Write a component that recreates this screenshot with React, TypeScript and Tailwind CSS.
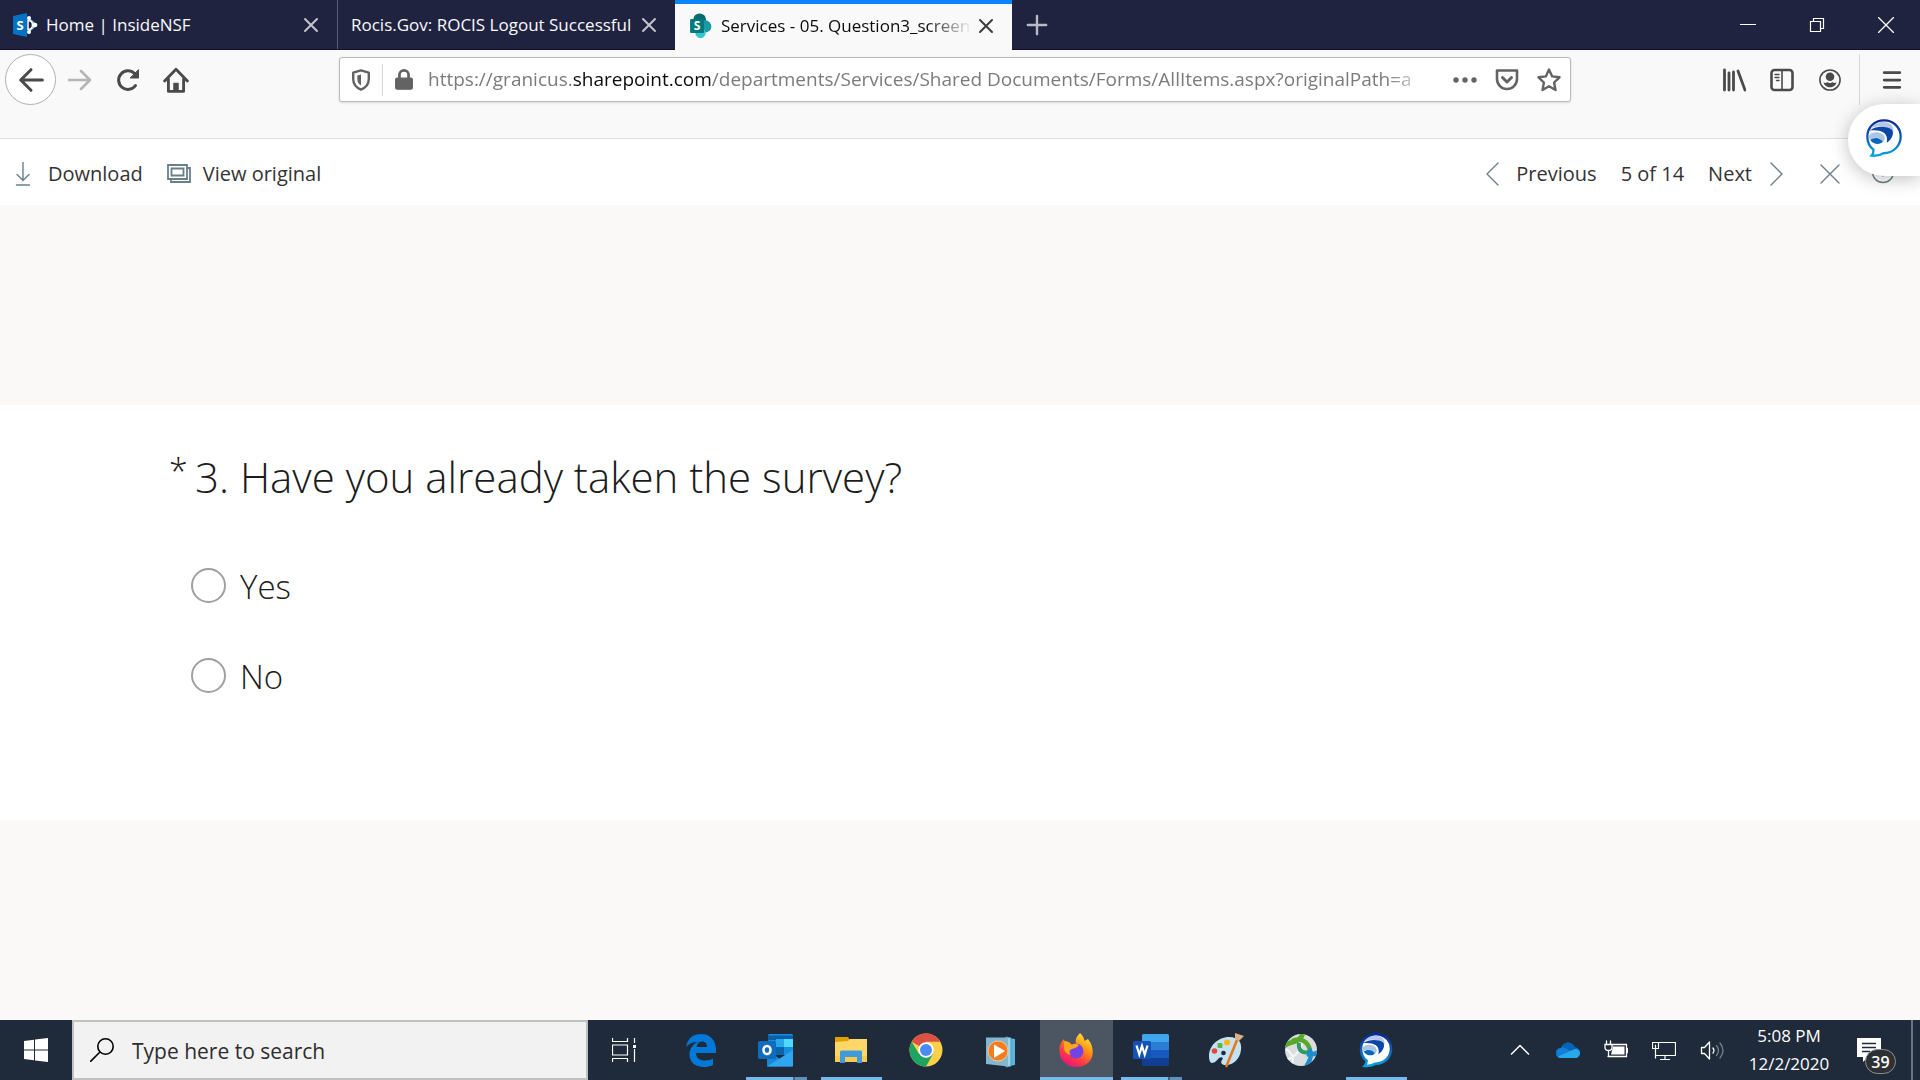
import React from "react";

type IconProps = { children: React.ReactNode; size?: string; box?: string };

function Icon({ children, size = "size-6", box = "0 0 24 24" }: IconProps) {
  return (
    <svg viewBox={box} className={`${size} shrink-0`} fill="none" stroke="currentColor" strokeWidth="2.6" strokeLinecap="round" strokeLinejoin="round" aria-hidden="true">
      {children}
    </svg>
  );
}

function CloseX() {
  return (
    <Icon size="size-4" box="0 0 16 16">
      <path d="M2 2l12 12M14 2L2 14" strokeWidth="2" />
    </Icon>
  );
}

function ChatLogo({ size, solid }: { size: string; solid?: boolean }) {
  return (
    <svg viewBox="0 0 40 42" className={`${size} shrink-0`} aria-hidden="true">
      <defs>
        <linearGradient id="chatEdge" x1="0" y1="0" x2="0" y2="1">
          <stop offset="0" stopColor="#0a2a96" />
          <stop offset="0.5" stopColor="#0b5db5" />
          <stop offset="1" stopColor="#06a5e0" />
        </linearGradient>
      </defs>
      <path d="M20 2.500C30 2.500 37.500 10 37.500 19.500S30 37 19.500 37C17 38.500 12 40 7 39.500C8.500 38 9 36 9 33.500C4.500 30 2.500 25 2.500 19.500C2.500 10 10 2.500 20 2.500Z" fill="#fff" stroke="url(#chatEdge)" strokeWidth={solid ? 3 : 2.4} />
      <path d="M6 11C11 4 21 2.500 27 6.500C31 10 30.500 15 28 19C28 13 25 10 20 9.500C14 8.500 10 9 6 11Z" fill="#b6c5e8" />
      <path d="M5 13C12 8 23 8.500 28 12C31 15 29 22 23 26C24 19 22 15.500 15 13.500C12 12.600 8 12.600 5 13Z" fill="#0b47a5" />
      <path d="M4.500 18C8 13.500 17 14 20 18.500C21.500 21 21 24 18.500 26C17 21 12 19 4.500 22.500Z" fill="#a9c4e6" />
      <path d="M5.500 23C9 20 16 20 18.500 25C16 28.500 9 28 5.500 23Z" fill="#0a66b6" />
    </svg>
  );
}

function TabBar() {
  return (
    <header className="flex h-[50px] border-b border-[#10122b] bg-[#202340] text-[17px] text-[#f9f9fa]">
      <div className="flex w-[338px] items-center border-r border-[#5b5d73] pl-3 pr-4">
        <svg viewBox="0 0 26 26" className="size-[26px] shrink-0" aria-hidden="true">
          <path d="M1 4l14-3v24L1 22z" fill="#0072c6" />
          <path d="M16 6l8 7-8 7" fill="none" stroke="#8fc8f0" strokeWidth="2" />
          <path d="M16 8.500a4.500 4.500 0 0 1 0 9z" fill="none" stroke="#fff" strokeWidth="1.500" />
          <circle cx="17" cy="6" r="2" fill="#fff" />
          <circle cx="23" cy="13" r="2.300" fill="#fff" />
          <circle cx="17" cy="20" r="2" fill="#fff" />
          <text x="8" y="18" fontSize="13" fontWeight="700" fill="#fff" textAnchor="middle" fontFamily="Open Sans">S</text>
        </svg>
        <span className="ml-2 flex-1 whitespace-nowrap">Home | InsideNSF</span>
        <button aria-label="Close tab" className="flex size-5 items-center justify-center text-[#c3c3cc]"><CloseX /></button>
      </div>
      <div className="flex w-[337px] items-center pl-[13px] pr-4">
        <span className="flex-1 whitespace-nowrap">Rocis.Gov: ROCIS Logout Successful</span>
        <button aria-label="Close tab" className="flex size-5 items-center justify-center text-[#c3c3cc]"><CloseX /></button>
      </div>
      <div className="-mb-px flex w-[337px] items-center border-t-4 border-[#0a84ff] bg-[#f9f9fa] pb-[3px] pl-[13px] pr-4 text-[#0c0c0d]">
        <svg viewBox="0 0 26 30" className="h-[26px] w-[25px] shrink-0" aria-hidden="true">
          <circle cx="12" cy="8" r="7.500" fill="#036c70" />
          <circle cx="18.500" cy="15.500" r="7" fill="#1a9ba1" />
          <circle cx="13" cy="23" r="6" fill="#37c6d0" />
          <rect x="1" y="7" width="16" height="16" rx="1" fill="#03787c" />
          <text x="9" y="20" fontSize="14" fontWeight="700" fill="#fff" textAnchor="middle" fontFamily="Open Sans">S</text>
        </svg>
        <span className="ml-2 flex-1 overflow-hidden whitespace-nowrap [mask-image:linear-gradient(to_right,black_82%,transparent)]">Services - 05. Question3_screen</span>
        <button aria-label="Close tab" className="ml-1 flex size-5 items-center justify-center text-[#3c3c3d]"><CloseX /></button>
      </div>
      <button aria-label="New tab" className="flex w-[50px] items-center justify-center text-[#b9bac6]">
        <Icon size="size-[22px]"><path d="M12 2v20M2 12h20" strokeWidth="2.600" /></Icon>
      </button>
      <div className="ml-auto flex text-white">
        <button aria-label="Minimize" className="flex w-[69px] items-center justify-center"><Icon size="size-4" box="0 0 16 16"><path d="M0 7.500h16" strokeWidth="1" /></Icon></button>
        <button aria-label="Restore" className="flex w-[69px] items-center justify-center"><Icon size="size-4" box="0 0 16 16"><path d="M1.500 4.500h10v10h-10zM4.500 4v-2.500h10v10h-2.500" strokeWidth="1.200" strokeLinejoin="miter" /></Icon></button>
        <button aria-label="Close window" className="flex w-[69px] items-center justify-center"><Icon size="size-4" box="0 0 16 16"><path d="M.5.5l15 15M15.500.5l-15 15" strokeWidth="1.300" /></Icon></button>
      </div>
    </header>
  );
}

function Toolbar() {
  return (
    <nav className="flex h-[89px] items-start border-b border-[#dedede] bg-[#f9f9fa] pt-1 text-[#4a4a4b]">
      <div className="flex h-[51px] w-[339px] shrink-0 items-center pl-[5px]">
        <button aria-label="Back" className="flex size-[51px] items-center justify-center rounded-full border border-[#b0b0b0] bg-white">
          <Icon size="size-[26px]"><path d="M22.500 12H2.500M12 2.500L2.500 12l9.500 9.500" strokeWidth="2.800" /></Icon>
        </button>
        <button aria-label="Forward" className="flex w-12 items-center justify-center text-[#b5b5b6]"><Icon><path d="M1 12h21M13 3l9 9-9 9" /></Icon></button>
        <button aria-label="Reload" className="flex w-12 items-center justify-center"><Icon><path d="M19.500 17.500A9.300 9.300 0 1 1 18.500 5.500" strokeWidth="3" /><path d="M22.500 2v8h-8z" fill="currentColor" strokeWidth="1" /></Icon></button>
        <button aria-label="Home" className="flex w-12 items-center justify-center">
          <Icon size="size-[26px]"><path d="M1.500 13L12 2l10.500 11M5 11v11.500h14V11" /><path d="M10 15h4v7h-4z" fill="currentColor" strokeWidth="1" /></Icon>
        </button>
      </div>
      <div className="mt-[3px] flex h-[45px] min-w-0 flex-1 items-center rounded-[3px] border border-[#b9b9bb] bg-white text-[#636364] shadow-sm">
        <button aria-label="Tracking protection" className="flex w-[42px] items-center justify-center"><Icon size="size-[22px]"><path d="M12 1.500l8.500 2.500v7c0 6-3.500 9.500-8.500 11.500-5-2-8.500-5.500-8.500-11.500V4z" /><path d="M12 6v12c-2.500-1.500-4-3.500-4-7V7z" fill="currentColor" stroke="none" /></Icon></button>
        <span className="h-8 w-px bg-[#d7d7db]" />
        <button aria-label="Connection secure" className="flex w-[42px] items-center justify-center"><Icon size="size-[22px]"><rect x="3" y="10" width="18" height="12" rx="1.500" fill="currentColor" strokeWidth="1.500" /><path d="M7 10V6.500a5 5 0 0 1 10 0V10" strokeWidth="3" /></Icon></button>
        <div className="ml-[3px] min-w-0 flex-1 overflow-hidden whitespace-nowrap text-[19px] text-[#7b7b7c] [mask-image:linear-gradient(to_right,black_96%,transparent)]">
          https://granicus.<span className="text-[#0c0c0d]">sharepoint.com</span>/departments/Services/Shared Documents/Forms/AllItems.aspx?originalPath=a
        </div>
        <button aria-label="Page actions" className="flex w-[50px] items-center justify-end pr-px"><Icon><g fill="currentColor" stroke="none"><circle cx="3" cy="12" r="2.700" /><circle cx="12" cy="12" r="2.700" /><circle cx="21" cy="12" r="2.700" /></g></Icon></button>
        <button aria-label="Save to Pocket" className="ml-2 flex w-[42px] items-center justify-center"><Icon><path d="M2 2.500h20V11a10 10 0 0 1-20 0z" /><path d="M7.500 9.500l4.500 4.500 4.500-4.500" strokeWidth="3" /></Icon></button>
        <button aria-label="Bookmark" className="flex w-[42px] items-center justify-center"><Icon><path d="M12 1.500l3.200 6.900 7.300.9-5.400 5.200 1.400 7.500-6.500-3.700L5.500 22l1.400-7.500L1.500 9.300l7.300-.9z" strokeWidth="2.400" /></Icon></button>
      </div>
      <div className="flex h-[51px] w-[349px] shrink-0 items-center justify-end">
        <button aria-label="Library" className="flex w-12 items-center justify-center"><Icon><path d="M2.500 2v20M7 5v17M11.500 4v18M16 3l7 19" strokeWidth="2.800" /></Icon></button>
        <button aria-label="Sidebars" className="flex w-12 items-center justify-center"><Icon><rect x="1.500" y="2" width="21" height="20" rx="3" /><path d="M12 2v20" strokeWidth="1.600" /><path d="M5 6.500h4M5 9.500h4M6.500 12.500h2.500" strokeWidth="1.400" /></Icon></button>
        <button aria-label="Account" className="flex w-12 items-center justify-center"><Icon size="size-[22px]"><circle cx="12" cy="12" r="11" strokeWidth="1.700" /><circle cx="12" cy="8.500" r="4.700" fill="currentColor" stroke="none" /><path d="M5 14.500c2 1.500 4 0 4.500 0s2 1 2.500 1 2-1 2.500-1 2.500 1.500 4.500 0c-.5 3.500-4 5.500-7 5.500s-6.500-2-7-5.500z" fill="currentColor" stroke="none" /></Icon></button>
        <span className="ml-[5px] h-full w-px bg-[#d7d7db]" />
        <button aria-label="Menu" className="flex w-[60px] items-center justify-center pl-1"><Icon size="size-[22px]"><path d="M3.500 4h17M3.500 12h17M3.500 20h17" strokeWidth="3" /></Icon></button>
      </div>
    </nav>
  );
}

function CommandBar() {
  return (
    <div className="relative flex h-[66px] items-center bg-white pt-[3px] text-[20px] text-[#333]">
      <button className="flex items-center gap-[13px] pl-[11px]">
        <span className="text-[#6a7f8c]"><Icon><path d="M12 0v18M6 12.500l6 6L18 12.500M5.500 23h13" strokeWidth="1.400" /></Icon></span>
        Download
      </button>
      <button className="ml-6 flex items-center gap-3">
        <span className="text-[#6a7f8c]"><Icon><path d="M1 3h19v14H1zM4.500 6.500h12v7h-12zM20 6h3v14H4v-3" strokeWidth="1.800" strokeLinejoin="miter" /></Icon></span>
        View original
      </button>
      <div className="ml-auto flex items-center pr-[25px]">
        <button className="flex items-center gap-3"><span className="text-[#6a7f8c]"><Icon><path d="M18 1L7 12l11 11" strokeWidth="1.400" /></Icon></span>Previous</button>
        <span className="ml-6">5 of 14</span>
        <button className="ml-6 flex items-center gap-3">Next<span className="text-[#6a7f8c]"><Icon><path d="M7 1l11 11L7 23" strokeWidth="1.400" /></Icon></span></button>
        <button aria-label="Close preview" className="ml-[30px] text-[#6a7f8c]"><Icon><path d="M3 3l18 18M21 3L3 21" strokeWidth="1.400" /></Icon></button>
        <button aria-label="Information" className="ml-[29px] text-[#6a7f8c]"><Icon><circle cx="12" cy="10" r="10.500" strokeWidth="1.400" /><path d="M12 8v6M12 4v1" strokeWidth="1.400" /></Icon></button>
      </div>
      <button aria-label="Open chat" className="absolute -top-[35px] right-0 flex h-[72px] w-[72px] items-center justify-center rounded-l-full bg-white pb-1 shadow-[0_3px_18px_rgba(0,0,0,0.25)]">
        <ChatLogo size="size-10" />
      </button>
    </div>
  );
}

function Question() {
  return (
    <main className="flex flex-1 items-center bg-[#faf9f8]">
      <fieldset className="h-[415px] w-full bg-white pl-[169px] pt-[46px] text-[#1c1c1c]">
        <legend className="float-left flex w-full text-[42px] leading-[52px] font-light">
          <span className="w-[26px] text-[34px] leading-10">*</span>
          <span>3. Have you already taken the survey?</span>
        </legend>
        <div className="clear-both flex flex-col gap-[34px] pl-[22px] pt-14">
          {["Yes", "No"].map((answer) => (
            <label key={answer} className="flex h-14 items-center gap-[14px] text-[33px] font-light">
              <input type="radio" name="taken" className="mb-1 size-[35px] appearance-none rounded-full border-2 border-[#a0a0a0] bg-white" />
              {answer}
            </label>
          ))}
        </div>
      </fieldset>
    </main>
  );
}

type App = { name: string; art: React.ReactNode; state?: "open" | "stacked" | "active" };

const apps: App[] = [
  { name: "Microsoft Edge", art: <path d="M3 15C5 5 11 2 18 2c10 0 15 7 15 16v3H13c0 5 4 7.500 9 7.500 4 0 6-1 8-2v6.500c-3 1.500-6 2-9 2C12 35 6 30 6.500 21c.5-5 4-9 8-11C9 10 6 12 3 15zm10.500 0h10.500c0-4-2-5.500-5-5.500s-5 2-5.500 5.500z" fill="#0078d7" /> },
  {
    name: "Outlook", state: "stacked",
    art: <><rect x="10" y="2" width="25" height="21" rx="1.500" fill="#1490df" /><path d="M10 3.500h25V8H10z" fill="#0f5fa8" /><path d="M18 7h8v8h-8z" fill="#28a8ea" /><path d="M26 7h9v8h-9z" fill="#50d9ff" /><path d="M18 15h8v8h-8z" fill="#0a64ad" /><path d="M9 18l13 9 13-9v15.500a1 1 0 0 1-1 1H10a1 1 0 0 1-1-1z" fill="#1a86d9" /><path d="M9 34.500L35 18v15.500a1 1 0 0 1-1 1z" fill="#2fa6ef" /><rect y="9" width="18" height="18" rx="1.500" fill="#0f6cbd" /><ellipse cx="9" cy="18" rx="3.500" ry="4" fill="none" stroke="#fff" strokeWidth="2.600" /></>,
  },
  {
    name: "File Explorer", state: "open",
    art: <><path d="M2 5h13l2 3v22H2z" fill="#dfa000" /><path d="M2 10l13-1 2-2h17v23H2z" fill="#ffd769" /><path d="M2 24h32v6H2z" fill="#f9cb4c" /><path d="M7 31V20q0-1.500 1.500-1.500h19Q29 18.500 29 20v11h-5v-6H12v6z" fill="#3f9bdc" /></>,
  },
  {
    name: "Chrome", art: <><circle cx="18" cy="18" r="16.500" fill="#fcd04b" /><path d="M18 18L3.700 9.800A16.500 16.500 0 0 1 32.300 9.800H18z" fill="#dd5144" /><path d="M3.700 9.800A16.500 16.500 0 0 0 18 34.500L25 22l-7-4-7 4z" fill="#1da462" /><circle cx="18" cy="18" r="7.700" fill="#fff" /><circle cx="18" cy="18" r="6" fill="#4c8bf5" /></>,
  },
  {
    name: "Media Player", art: <><path d="M26 6l6 1v26l-6 1z" fill="#5bb4dc" /><path d="M23 5l5 1v28l-5 1z" fill="#9dd4ec" stroke="#4b9bc2" /><path d="M3 5.500h21l1 .5v28.500L3 32z" fill="#84b7cd" /><circle cx="15" cy="19" r="10" fill="#f47b20" stroke="#f9c796" /><path d="M11 12.500L22 19l-11 7z" fill="#fff" /></>,
  },
  {
    name: "Firefox", state: "active",
    art: <><defs><linearGradient id="fox" x1="0.9" y1="0" x2="0.3" y2="1"><stop offset="0" stopColor="#fff44f" /><stop offset="0.400" stopColor="#ff980e" /><stop offset="0.750" stopColor="#ff3647" /><stop offset="1" stopColor="#e31587" /></linearGradient></defs><path d="M22 1c3 3 4 5 4.500 8L30 7c4 5 6 12 4 18-2 6-8 10-16 10S2 29 1.500 20C1 14 3 10 6 7l1 4 4-1 3 3c2-1 3-1 4-1-1-5 1-8 4-11z" fill="url(#fox)" /><circle cx="18" cy="19" r="7.500" fill="#7542e5" /><path d="M6 9c4 0 6 2 8 4 2-2 5-1 7 0-1 2-4 3-7 4-3 1-3 4-1 6-5-1-7-4-7-8z" fill="#ffa51d" /></>,
  },
  {
    name: "Word", state: "stacked",
    art: <><rect x="9" y="2" width="27" height="32" rx="1.500" fill="#103f91" /><path d="M9 3.500Q9 2 10.500 2h24Q36 2 36 3.500V10H9z" fill="#41a5ee" /><path d="M9 10h27v8H9z" fill="#2b7cd3" /><path d="M9 18h27v8H9z" fill="#185abd" /><rect y="9" width="18" height="18" rx="1.500" fill="#1251b5" /><path d="M3.500 13.500L6.300 22.500 9 14l2.700 8.500 2.800-9" fill="none" stroke="#fff" strokeWidth="2.200" /></>,
  },
  {
    name: "Paint", art: <><path d="M1 24C1 14 10 5 21 5c9 0 13 5 12 13-1 9-8 15-15 15-4 0-6-2-4-5 2-2 0-4-3-2-2 2-4 5-7 5-2 0-3-3-3-7z" fill="#c5e2f3" /><circle cx="15.500" cy="21" r="2.300" fill="#1f2b3a" /><circle cx="6.500" cy="19" r="2.800" fill="#e2483c" /><rect x="9.500" y="11" width="5" height="5" rx="1" fill="#5cb548" /><circle cx="19" cy="10.500" r="3" fill="#ffb31a" /><path d="M29 8L18.500 34" stroke="#e47a1c" strokeWidth="2.600" strokeLinecap="round" /><path d="M27 1l9 3-5 5-4-1.500z" fill="#dab084" /></>,
  },
  {
    name: "AnyConnect",
    art: (
      <>
        <defs><clipPath id="globe"><circle cx="18" cy="18" r="16" /></clipPath></defs>
        <circle cx="18" cy="18" r="16" fill="#dadedf" />
        <g clipPath="url(#globe)" fill="none">
          <path d="M1 28C10 27 18 20 20 7M8 35C12 27 9 21 3 17" stroke="#f6f7f7" strokeWidth="2" />
          <path d="M1 14C8 8 17 12 20 1" stroke="#5aa829" strokeWidth="5" />
          <path d="M9 9C18 5 25 10 27 18" stroke="#5aa829" strokeWidth="4.500" />
          <path d="M16 11c-1 7 3 11 11 9" stroke="#2f9a63" strokeWidth="4" />
          <path d="M26 17c4 5 1 12-3 18M24 22c4 1 8 0 11-2" stroke="#1c8ccc" strokeWidth="4.500" />
        </g>
      </>
    ),
  },
];

function AppButton({ name, art, state }: App) {
  return (
    <button aria-label={name} className={`relative flex w-[73px] items-center justify-center pr-0.5 ${state === "active" ? "bg-[#4c5663]" : ""}`}>
      <svg viewBox="0 0 36 36" className="size-9 overflow-visible" aria-hidden="true">{art}</svg>
      {state === "active" && <span className="absolute inset-x-0 bottom-0 h-[3px] bg-[#76b9ed]" />}
      {state === "open" && <span className="absolute inset-x-1.5 bottom-0 h-[3px] bg-[#76b9ed]" />}
      {state === "stacked" && <span className="absolute inset-x-1.5 bottom-0 flex h-[3px] bg-[#5f92bb]"><span className="w-[47px] border-r-2 border-[#41647f] bg-[#76b9ed] box-content" /></span>}
    </button>
  );
}

function Taskbar() {
  return (
    <footer className="flex h-[60px] bg-[#1f2b3a] text-white">
      <button aria-label="Start" className="flex w-[72px] items-center justify-center">
        <svg viewBox="0 0 24 24" className="size-6" fill="#fff" aria-hidden="true"><path d="M0 3l10-1.300v9.800H0zM11 1.500L24 0v11.500H11zM0 12.500h10v9.800L0 21zM11 12.500h13V24l-13-1.500z" /></svg>
      </button>
      <label className="flex w-[516px] items-center border-2 border-[#c0c2c1] bg-[#f2f2f2] pl-4 text-black">
        <Icon><circle cx="15.500" cy="8.500" r="7.700" strokeWidth="1.600" /><path d="M10 14L.5 23.500" strokeWidth="1.600" /></Icon>
        <input aria-label="Search" placeholder="Type here to search" className="ml-[18px] w-full min-w-0 bg-transparent pt-[3px] text-[21px] outline-none placeholder:text-[#2d2d2d]" />
      </label>
      <div className="flex gap-0.5">
        <button aria-label="Task view" className="flex w-[75px] items-center justify-center pr-1">
          <Icon><path d="M.5 0v3.500h15V0M.5 7h15v10H.5zM.5 24v-3.500h15V24M22.500 0v5M22.500 11v13" strokeWidth="1.200" strokeLinecap="butt" strokeLinejoin="miter" /><path d="M21 7h3v3h-3z" fill="currentColor" stroke="none" /></Icon>
        </button>
        {apps.map((app) => <AppButton key={app.name} {...app} />)}
        <button aria-label="Jabber" className="relative flex w-[73px] items-center justify-center pr-0.5">
          <ChatLogo size="size-9" solid />
          <span className="absolute inset-x-1.5 bottom-0 h-[3px] bg-[#76b9ed]" />
        </button>
      </div>
      <div className="ml-auto flex items-center">
        <button aria-label="Show hidden icons" className="flex w-12 justify-center"><Icon><path d="M3.500 16L12 7.500l8.500 8.500" strokeWidth="1.500" /></Icon></button>
        <button aria-label="OneDrive" className="flex w-12 justify-center">
          <svg viewBox="0 0 24 24" className="size-6" aria-hidden="true"><path d="M5 10C7 4 15 2 19 9c4 1 5 3 5 5l-10 6H4a4.500 4.500 0 0 1 1-10z" fill="#0364b8" /><path d="M4.500 10C8 8.500 11 11 14 13L2 19c-3-3-2-8 2.500-9z" fill="#0f7fd8" /><path d="M2 18.500l12-5.500 5-2c4 0 5 2.500 5 4.500s-2 4.500-4 4.500H4.500q-2 0-2.500-1.500z" fill="#28a8ea" /></svg>
        </button>
        <button aria-label="Battery" className="flex w-12 justify-center"><Icon><path d="M8 6.500h14.500v12H4M23.500 10.500v4M2.500 3v3M6.500 3v3M1 6.500h7v3q0 3-3.500 3T1 9.500zM4.500 12.500v6" strokeWidth="1.300" strokeLinejoin="miter" /><path d="M9 8.500h11.500v8H7z" fill="currentColor" stroke="none" /></Icon></button>
        <button aria-label="Network" className="flex w-12 justify-center"><Icon><path d="M7 4.500h16.500v13H4M.5 4.500h6v6h-6zM3.500 7v13M13 18v3M8.500 21.500h9" strokeWidth="1.200" strokeLinejoin="miter" /></Icon></button>
        <button aria-label="Volume" className="flex w-12 justify-center"><Icon><path d="M1.500 9.500h3L9.500 4v17l-5-5.500h-3z" strokeWidth="1.300" /><path d="M13 10q2 2.500 0 5" strokeWidth="1.300" /><path d="M16.500 7.500q4 5 0 10M20 5q6 7.500 0 15" strokeWidth="1.300" opacity=".4" /></Icon></button>
        <div className="w-[106px] text-center text-[17px] leading-7"><p>5:08 PM</p><p>12/2/2020</p></div>
        <button aria-label="39 notifications" className="flex w-[69px] pl-[15px]">
          <span className="relative">
            <svg viewBox="0 0 24 24" className="size-6" aria-hidden="true"><path d="M0 0h24v19H11l-5 5v-5H0z" fill="#fff" /><path d="M5 5.500h14M5 9.500h14M5 13.500h8" stroke="#1f2b3a" strokeWidth="1.300" /></svg>
            <span className="absolute left-2 top-[11px] flex h-[25px] w-[31px] items-center justify-center rounded-full border border-[#8e8e8e] bg-[#2e3134] text-[16px] font-semibold">39</span>
          </span>
        </button>
        <span className="h-[60px] w-[9px] border-l-2 border-[#6b7480]" />
      </div>
    </footer>
  );
}

export default function App() {
  return (
    <div className="flex min-h-screen flex-col font-['Open_Sans',sans-serif]">
      <TabBar />
      <Toolbar />
      <CommandBar />
      <Question />
      <Taskbar />
    </div>
  );
}
